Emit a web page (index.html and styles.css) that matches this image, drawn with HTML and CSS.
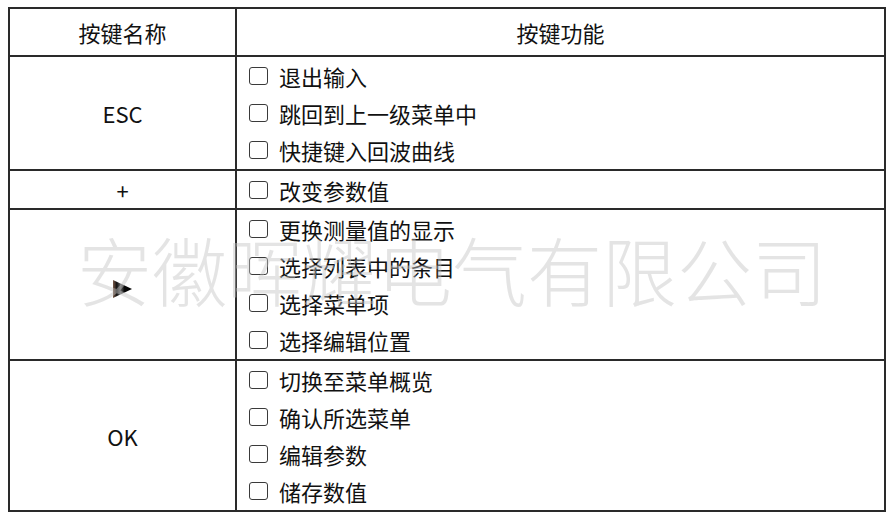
FILE: index.html
```html
<!DOCTYPE html>
<html lang="zh-CN">
<head>
<meta charset="utf-8">
<title>按键功能</title>
<link rel="stylesheet" href="styles.css">
</head>
<body>
<div class="sheet">
  <table class="keys">
    <colgroup><col class="c-name"><col class="c-func"></colgroup>
    <thead>
      <tr class="r-head"><th>按键名称</th><th>按键功能</th></tr>
    </thead>
    <tbody>
      <tr class="r-3">
        <td class="key">ESC</td>
        <td class="func">
          <ul class="items">
            <li><span class="box"></span>退出输入</li>
            <li><span class="box"></span>跳回到上一级菜单中</li>
            <li><span class="box"></span>快捷键入回波曲线</li>
          </ul>
        </td>
      </tr>
      <tr class="r-1">
        <td class="key">+</td>
        <td class="func">
          <ul class="items">
            <li><span class="box"></span>改变参数值</li>
          </ul>
        </td>
      </tr>
      <tr class="r-4">
        <td class="key">
          <svg class="arrow" width="19" height="18" viewBox="0 0 19 18">
            <defs>
              <linearGradient id="ag" x1="0" y1="0" x2="1" y2="0">
                <stop offset="0" stop-color="#7a5a48"/>
                <stop offset="0.2" stop-color="#111"/>
                <stop offset="0.4" stop-color="#666"/>
                <stop offset="0.6" stop-color="#0a0a0a"/>
                <stop offset="1" stop-color="#000"/>
              </linearGradient>
            </defs>
            <polygon points="0,0 19,9 0,18" fill="url(#ag)"/>
          </svg>
        </td>
        <td class="func">
          <ul class="items">
            <li><span class="box"></span>更换测量值的显示</li>
            <li><span class="box"></span>选择列表中的条目</li>
            <li><span class="box"></span>选择菜单项</li>
            <li><span class="box"></span>选择编辑位置</li>
          </ul>
        </td>
      </tr>
      <tr class="r-4">
        <td class="key">OK</td>
        <td class="func">
          <ul class="items">
            <li><span class="box"></span>切换至菜单概览</li>
            <li><span class="box"></span>确认所选菜单</li>
            <li><span class="box"></span>编辑参数</li>
            <li><span class="box"></span>储存数值</li>
          </ul>
        </td>
      </tr>
    </tbody>
  </table>
  <div class="watermark">安徽晖耀电气有限公司</div>
</div>
</body>
</html>
```

FILE: styles.css
```css
html, body {
  background: #ffffff;
}
body {
  margin: 7px 0 0 8px;
  font-family: "Noto Sans CJK SC", "Noto Sans", sans-serif;
  color: #111111;
}
.sheet {
  position: relative;
  width: 878px;
}
.keys {
  width: 878px;
  border-collapse: collapse;
  table-layout: fixed;
  font-size: 22px;
}
.c-name { width: 227px; }
.keys th, .keys td {
  border: 2px solid #2a2a2a;
  padding: 0;
}
.keys th {
  font-weight: 400;
  text-align: center;
  vertical-align: middle;
}
.r-head { height: 48px; }
.r-3 { height: 114px; }
.r-1 { height: 39px; }
.r-4 { height: 151px; }
.key {
  text-align: center;
  vertical-align: middle;
}
.func {
  vertical-align: middle;
}
.items {
  list-style: none;
  margin: 0;
  padding: 0 0 0 12px;
}
.items li {
  display: flex;
  align-items: center;
  height: 37px;
  white-space: nowrap;
}
.box {
  display: inline-block;
  box-sizing: border-box;
  width: 19px;
  height: 18px;
  border: 1.6px solid #3a3a3a;
  border-radius: 3px;
  margin-right: 11px;
  flex: none;
}
.arrow {
  display: inline-block;
  vertical-align: middle;
  margin-top: 0;
}
.watermark {
  position: absolute;
  left: 69px;
  top: 210px;
  font-size: 75px;
  line-height: 104px;
  color: rgba(195, 195, 195, 0.45);
  white-space: nowrap;
  pointer-events: none;
  font-weight: 300;
}
```
